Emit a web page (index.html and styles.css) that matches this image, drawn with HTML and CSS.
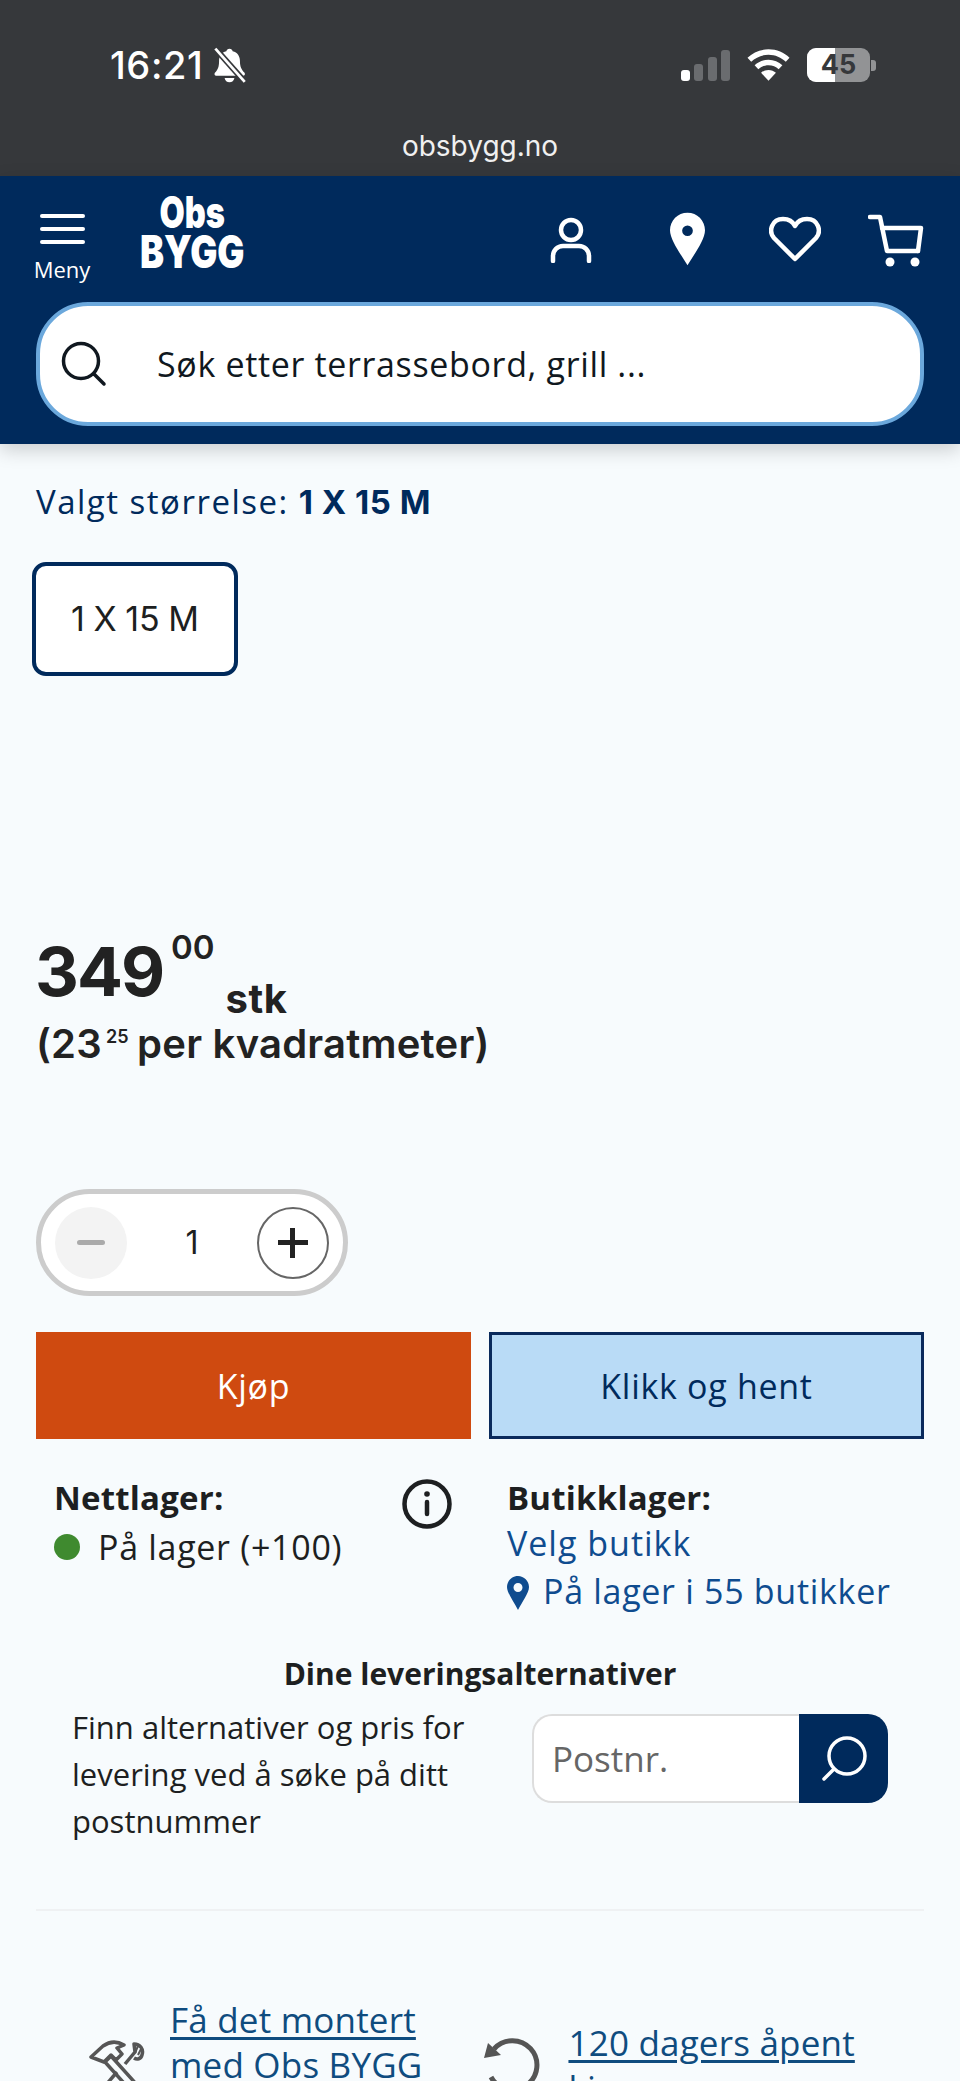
FILE: index.html
```html
<!DOCTYPE html>
<html lang="no">
<head>
<meta charset="utf-8">
<title>Obs BYGG</title>
<link rel="stylesheet" href="styles.css">
</head>
<body>
<div class="screen">
  <div class="status">
    <div class="status-row">
      <div class="status-left">
        <span class="time">16:21</span>
        <svg class="bell" viewBox="0 0 32 34" width="35" height="37"><path d="M16 1.500c-1.600 0-2.600 1-2.900 2.400C8.600 5 6.400 8.400 6.400 13c0 5-1 7.500-3.600 10.500-1.200 1.400-.4 3 1.400 3h24c1.800 0 2.600-1.600 1.400-3C27 20.500 25.600 18 25.600 13c0-4.600-2.200-8-6.700-9.100C18.600 2.500 17.600 1.500 16 1.500zM11.500 28.500c.4 2.400 2.200 4 4.500 4s4.100-1.600 4.500-4z" fill="#fff"/><path d="M3 1.500 30 32" stroke="#36383b" stroke-width="5.500"/><path d="M3 1.500 30 32" stroke="#fff" stroke-width="2.500"/></svg>
      </div>
      <div class="status-right">
        <div class="signal"><i class="bar b1"></i><i class="bar b2"></i><i class="bar b3"></i><i class="bar b4"></i></div>
        <svg class="wifi" viewBox="0 0 44 32" width="43" height="32"><path d="M22 0C13.500 0 6 3.300.500 8.700l3.800 4.100C8.900 8.300 15.100 5.500 22 5.500s13.100 2.800 17.700 7.300l3.800-4.100C38 3.300 30.500 0 22 0z" fill="#fff"/><path d="M22 10.500c-5.500 0-10.500 2.200-14.200 5.700l3.800 4.100c2.700-2.500 6.400-4.100 10.400-4.100s7.700 1.600 10.400 4.100l3.800-4.100c-3.700-3.500-8.700-5.700-14.200-5.700z" fill="#fff"/><path d="M22 21c-3 0-5.600 1.100-7.600 3L22 32l7.600-8c-2-1.900-4.600-3-7.600-3z" fill="#fff"/></svg>
        <div class="battery"><span class="battery-fill"></span><span class="battery-num">45</span></div>
        <i class="battery-cap"></i>
      </div>
    </div>
    <div class="url">obsbygg.no</div>
  </div>

  <header class="header">
    <div class="nav">
      <div class="menu">
        <div class="burger"><i></i><i></i><i></i></div>
        <span class="menu-label">Meny</span>
      </div>
      <div class="logo"><span class="logo-top">Obs</span><span class="logo-bottom">BYGG</span></div>
      <div class="nav-icons">
        <svg class="ico-user" viewBox="0 0 42 46" width="42" height="46" fill="none" stroke="#fff" stroke-width="4.500"><circle cx="21" cy="13" r="10"/><path d="M3 44v-5a10 10 0 0 1 10-10h16a10 10 0 0 1 10 10v5" stroke-linecap="round"/></svg>
        <svg class="ico-pin" viewBox="0 0 36 54" width="35" height="54"><path fill="#fff" fill-rule="evenodd" d="M18 0C8 0 0 8 0 18c0 10 12 26 18 36 6-10 18-26 18-36C36 8 28 0 18 0zm0 13a5.500 5.500 0 1 1 0 11 5.500 5.500 0 0 1 0-11z"/></svg>
        <svg class="ico-heart" viewBox="0 0 52 46" width="52" height="46" fill="none" stroke="#fff" stroke-width="4.500" stroke-linejoin="round"><path d="M26 43 5 22C-1 15 3 3 14 3c6 0 10 3 12 7 2-4 6-7 12-7 11 0 15 12 9 19z"/></svg>
        <svg class="ico-cart" viewBox="0 0 56 54" width="56" height="54" fill="none" stroke="#fff" stroke-width="4.500" stroke-linejoin="round" stroke-linecap="round"><path d="M2 3h10l7 34h31"/><path d="M14 14h39l-3 23"/><circle cx="22" cy="48" r="4.500" fill="#fff" stroke="none"/><circle cx="47" cy="48" r="4.500" fill="#fff" stroke="none"/></svg>
      </div>
    </div>
    <div class="search">
      <svg class="search-ico" viewBox="0 0 46 46" width="46" height="46" fill="none" stroke="#101820" stroke-width="3.500" stroke-linecap="round"><circle cx="20" cy="20" r="17.500"/><path d="M33 33l10 10"/></svg>
      <span class="search-text">Søk etter terrassebord, grill ...</span>
    </div>
  </header>

  <main class="main">
    <p class="chosen">Valgt størrelse: <b>1 X 15 M</b></p>
    <div class="size">1 X 15 M</div>

    <div class="price"><span class="amount">349</span><span class="cents">00</span><span class="unit">stk</span></div>
    <div class="unit-price">(23<sup class="unit-cents">25</sup> per kvadratmeter)</div>

    <div class="stepper">
      <span class="step step-minus"><i class="minus"></i></span>
      <span class="qty">1</span>
      <span class="step step-plus"><i class="plus"></i></span>
    </div>

    <div class="buttons">
      <div class="btn btn-buy">Kjøp</div>
      <div class="btn btn-collect">Klikk og hent</div>
    </div>

    <div class="stock">
      <div class="stock-web">
        <div class="stock-head">
          <div>
            <div class="stock-title">Nettlager:</div>
            <div class="stock-line"><i class="dot"></i>På lager (+100)</div>
          </div>
          <svg class="info" viewBox="0 0 50 50" width="50" height="50" fill="none" stroke="#1d1f21" stroke-width="4.500"><circle cx="25" cy="25" r="22.500"/><path d="M25 23v12" stroke-linecap="round"/><circle cx="25" cy="15" r="2.800" fill="#1d1f21" stroke="none"/></svg>
        </div>
      </div>
      <div class="stock-shop">
        <div class="stock-title">Butikklager:</div>
        <div class="shop-link">Velg butikk</div>
        <div class="shop-line"><svg viewBox="0 0 22 34" width="22" height="34"><path fill="#0f4c8f" fill-rule="evenodd" d="M11 0C5 0 0 5 0 11c0 6 7 15 11 23 4-8 11-17 11-23C22 5 17 0 11 0zm0 7a4.500 4.500 0 1 1 0 9 4.500 4.500 0 0 1 0-9z"/></svg>På lager i 55 butikker</div>
      </div>
    </div>

    <h2 class="delivery-title">Dine leveringsalternativer</h2>
    <div class="delivery">
      <p class="delivery-text">Finn alternativer og pris for levering ved å søke på ditt postnummer</p>
      <div class="postal">
        <span class="postal-input">Postnr.</span>
        <span class="postal-btn"><svg viewBox="0 0 46 46" width="46" height="46" fill="none" stroke="#fff" stroke-width="3.500" stroke-linecap="round"><circle cx="26" cy="20" r="18"/><path d="M13 33 3 43"/></svg></span>
      </div>
    </div>

    <hr class="rule">

    <div class="perks">
      <div class="perk perk-mount">
        <svg class="perk-ico" viewBox="0 0 56 60" width="56" height="60" fill="none" stroke="#555" stroke-width="3.500" stroke-linejoin="round"><path d="M2 17 14 6C21 1 28 1 35 5l-7 3 5 6-6 6-5-5-7 7z"/><path d="M16 22l6-6 36 40-6 6z"/><path d="M36 24 46 12l-1-8c6 0 10 5 8 11-1 4-5 5-8 3"/><path d="M28 32 16 46"/><path d="M49 6l-3 7M52 9l-3 6" stroke-width="2"/></svg>
        <a class="perk-link">Få det montert<br>med Obs BYGG</a>
      </div>
      <div class="perk perk-return">
        <svg class="perk-ico2" viewBox="0 0 60 60" width="60" height="60" fill="none" stroke="#555" stroke-width="5"><path d="M13 13A24.500 24.500 0 1 1 10 41"/><path d="M7 7 3 22l17-3z" fill="#555" stroke="none"/></svg>
        <a class="perk-link perk-link-low">120 dagers åpent<br>kjøp</a>
      </div>
    </div>
  </main>
</div>
</body>
</html>
```
FILE: styles.css
```css
* { box-sizing: border-box; }
html, body { margin: 0; padding: 0; }
body { background: #f7fbfd; font-family: "Open Sans", "Liberation Sans", sans-serif; color: #1d1f21; }
.screen { height: 2081px; overflow: hidden; display: flex; flex-direction: column; }

.status { flex: none; height: 176px; background: #36383b; color: #fff; padding-top: 44px; }
.status-row { display: flex; justify-content: space-between; align-items: center; height: 42px; padding: 0 84px 0 110px; }
.status-left { display: flex; align-items: center; gap: 9px; }
.time { font: 500 38px/42px "Inter", sans-serif; letter-spacing: .6px; }
.bell { display: block; }
.status-right { display: flex; align-items: center; }
.signal { display: flex; align-items: flex-end; justify-content: space-between; width: 49px; height: 32px; margin-right: 17px; }
.bar { display: block; width: 9px; border-radius: 3px; background: #6a6c6f; }
.b1 { height: 11px; background: #fff; }
.b2 { height: 17px; }
.b3 { height: 24px; }
.b4 { height: 31px; }
.wifi { display: block; margin-right: 17px; }
.battery { position: relative; width: 63px; height: 34px; border-radius: 9px; background: #929395; overflow: hidden; text-align: center; }
.battery-fill { position: absolute; left: 0; top: 0; bottom: 0; width: 28px; background: #fff; }
.battery-num { position: relative; font: 700 27px/34px "Inter", sans-serif; color: #36383b; }
.battery-cap { display: block; width: 5px; height: 11px; margin-left: 1px; border-radius: 0 3px 3px 0; background: #929395; }
.url { text-align: center; margin-top: 42px; font: 400 28px/36px "Inter", "Liberation Sans", sans-serif; color: #f0f0f0; }

.header { flex: none; height: 268px; background: #002a5c; box-shadow: 0 6px 18px rgba(0,0,0,.18); padding: 0 36px; position: relative; }
.nav { display: flex; height: 126px; align-items: flex-start; }
.menu { width: 60px; margin-left: -4px; padding-top: 38px; display: flex; flex-direction: column; align-items: center; }
.burger { width: 45px; display: flex; flex-direction: column; gap: 9px; }
.burger i { display: block; height: 4px; border-radius: 2px; background: #fff; }
.menu-label { margin-top: 10px; font-size: 22px; line-height: 30px; color: #fff; }
.logo { display: flex; flex-direction: column; align-items: center; margin-left: 48px; width: 105px; padding-top: 16px; color: #fff; font-family: "Inter", sans-serif; font-weight: 900; }
.logo-top { font-size: 44px; line-height: 40px; transform: scaleX(.74); }
.logo-bottom { font-size: 45px; line-height: 40px; transform: scaleX(.8); white-space: nowrap; }
.nav-icons { margin-left: auto; display: flex; align-items: flex-start; padding-top: 36px; }
.ico-user { display: block; margin-top: 5px; margin-right: 78px; }
.ico-pin { display: block; margin-right: 64px; }
.ico-heart { display: block; margin-top: 4px; margin-right: 47px; }
.ico-cart { display: block; margin-top: 2px; }
.search { height: 124px; border: 4px solid #6ba8dc; border-radius: 52px; background: #fff; display: flex; align-items: center; padding-left: 21px; }
.search-ico { display: block; flex: none; }
.search-text { margin-left: 50px; font-size: 34px; letter-spacing: .65px; color: #101820; white-space: nowrap; }

.main { flex: none; padding: 36px 36px 0; }
.chosen { margin: 0; font-size: 33px; line-height: 44px; letter-spacing: 1.5px; color: #002a5c; }
.chosen b { font-family: "Inter", sans-serif; font-size: 33px; font-weight: 700; letter-spacing: .5px; word-spacing: 0; }
.size { width: 206px; height: 114px; margin: 38px 0 0 -4px; border: 4px solid #002a5c; border-radius: 14px; background: #fff; display: flex; align-items: center; justify-content: center; font: 400 34px/1 "Inter", sans-serif; word-spacing: -1px; color: #1d1f21; }

.price { height: 70px; margin-top: 260px; font-family: "Inter", sans-serif; line-height: 70px; white-space: nowrap; color: #222; }
.amount { font-size: 68px; font-weight: 700; letter-spacing: -2px; margin-left: -1px; }
.cents { font-size: 33px; font-weight: 600; vertical-align: 37px; line-height: 0; margin-left: 8px; }
.unit { font-size: 40px; font-weight: 700; letter-spacing: .5px; vertical-align: -17px; line-height: 0; margin-left: 11px; }
.unit-price { margin: 14px 0 0; font: 600 40px/48px "Inter", sans-serif; letter-spacing: .2px; color: #222; white-space: nowrap; }
.unit-cents { font-size: 18px; line-height: 0; vertical-align: 15px; margin: 0 -2px 0 4px; }

.stepper { width: 312px; height: 107px; margin-top: 121px; border: 5px solid #ccc; border-radius: 54px; background: #fff; display: flex; align-items: center; justify-content: space-between; padding: 0 14px; }
.step { flex: none; width: 72px; height: 72px; border-radius: 50%; display: flex; align-items: center; justify-content: center; }
.step-minus { background: #f3f3f3; }
.step-plus { border: 2px solid #666; }
.minus { display: block; width: 28px; height: 5px; border-radius: 3px; background: #aaa; }
.plus { display: block; width: 30px; height: 30px; background: linear-gradient(#222,#222) center/100% 5px no-repeat, linear-gradient(#222,#222) center/5px 100% no-repeat; border-radius: 3px; }
.qty { font: 400 32px/1 "Inter", sans-serif; }

.buttons { display: grid; grid-template-columns: 1fr 1fr; gap: 18px; margin-top: 36px; }
.btn { height: 107px; display: flex; align-items: center; justify-content: center; font-size: 34px; letter-spacing: .7px; }
.btn-buy { background: #cf4a10; color: #fff; }
.btn-collect { background: #b9dbf6; color: #002a5c; border: 3px solid #0a2a5c; }

.stock { display: flex; margin-top: 36px; padding-left: 18px; }
.stock-web { width: 453px; }
.stock-head { display: flex; justify-content: space-between; align-items: flex-start; width: 398px; }
.stock-head .info { display: block; margin-top: 4px; }
.stock-title { font-size: 33px; font-weight: 700; line-height: 46px; letter-spacing: .2px; color: #1d1f21; }
.stock-line { display: flex; align-items: center; margin-top: 1px; font-size: 34px; line-height: 50px; letter-spacing: .7px; }
.dot { display: block; width: 26px; height: 26px; margin-right: 18px; border-radius: 50%; background: #3f8a2f; }
.shop-link { font-size: 34px; line-height: 44px; letter-spacing: 1px; color: #0f4c8f; }
.shop-line { display: flex; align-items: center; gap: 14px; font-size: 34px; line-height: 50px; letter-spacing: .7px; color: #0f4c8f; margin-top: 1px; }
.shop-line svg { display: block; flex: none; margin-top: 4px; }

.delivery-title { margin: 36px 0 0; text-align: center; font-size: 30px; line-height: 44px; font-weight: 700; color: #1d1f21; }
.delivery { display: flex; justify-content: space-between; align-items: flex-start; padding: 0 36px; margin-top: 8px; }
.delivery-text { margin: 0; width: 420px; font-size: 31px; line-height: 47px; color: #1d1f21; }
.postal { display: flex; height: 89px; width: 356px; margin-top: 10px; }
.postal-input { flex: 1; border: 2px solid #ddd; border-right: 0; border-radius: 20px 0 0 20px; background: #fff; padding-left: 18px; display: flex; align-items: center; font-size: 35px; color: #666; }
.postal-btn { flex: none; width: 89px; background: #002a5c; border-radius: 0 20px 20px 0; display: flex; align-items: center; justify-content: center; }
.postal-btn svg { display: block; }

.rule { margin: 64px 0 0; border: 0; height: 2px; background: #eff1f3; }

.perks { display: flex; align-items: flex-start; margin-top: 86px; }
.perk { display: flex; align-items: flex-start; }
.perk-link { font-size: 35px; line-height: 45px; letter-spacing: .2px; white-space: nowrap; color: #0f4c7f; text-decoration: underline; text-decoration-thickness: 3px; text-underline-offset: 4px; }
.perk-link-low { margin-top: 23px; }
.perk-mount { margin-left: 53px; gap: 25px; }
.perk-return { margin-left: 59px; gap: 27px; }
.perk-ico { display: block; flex: none; margin-top: 43px; }
.perk-ico2 { display: block; flex: none; margin-top: 39px; }
```
